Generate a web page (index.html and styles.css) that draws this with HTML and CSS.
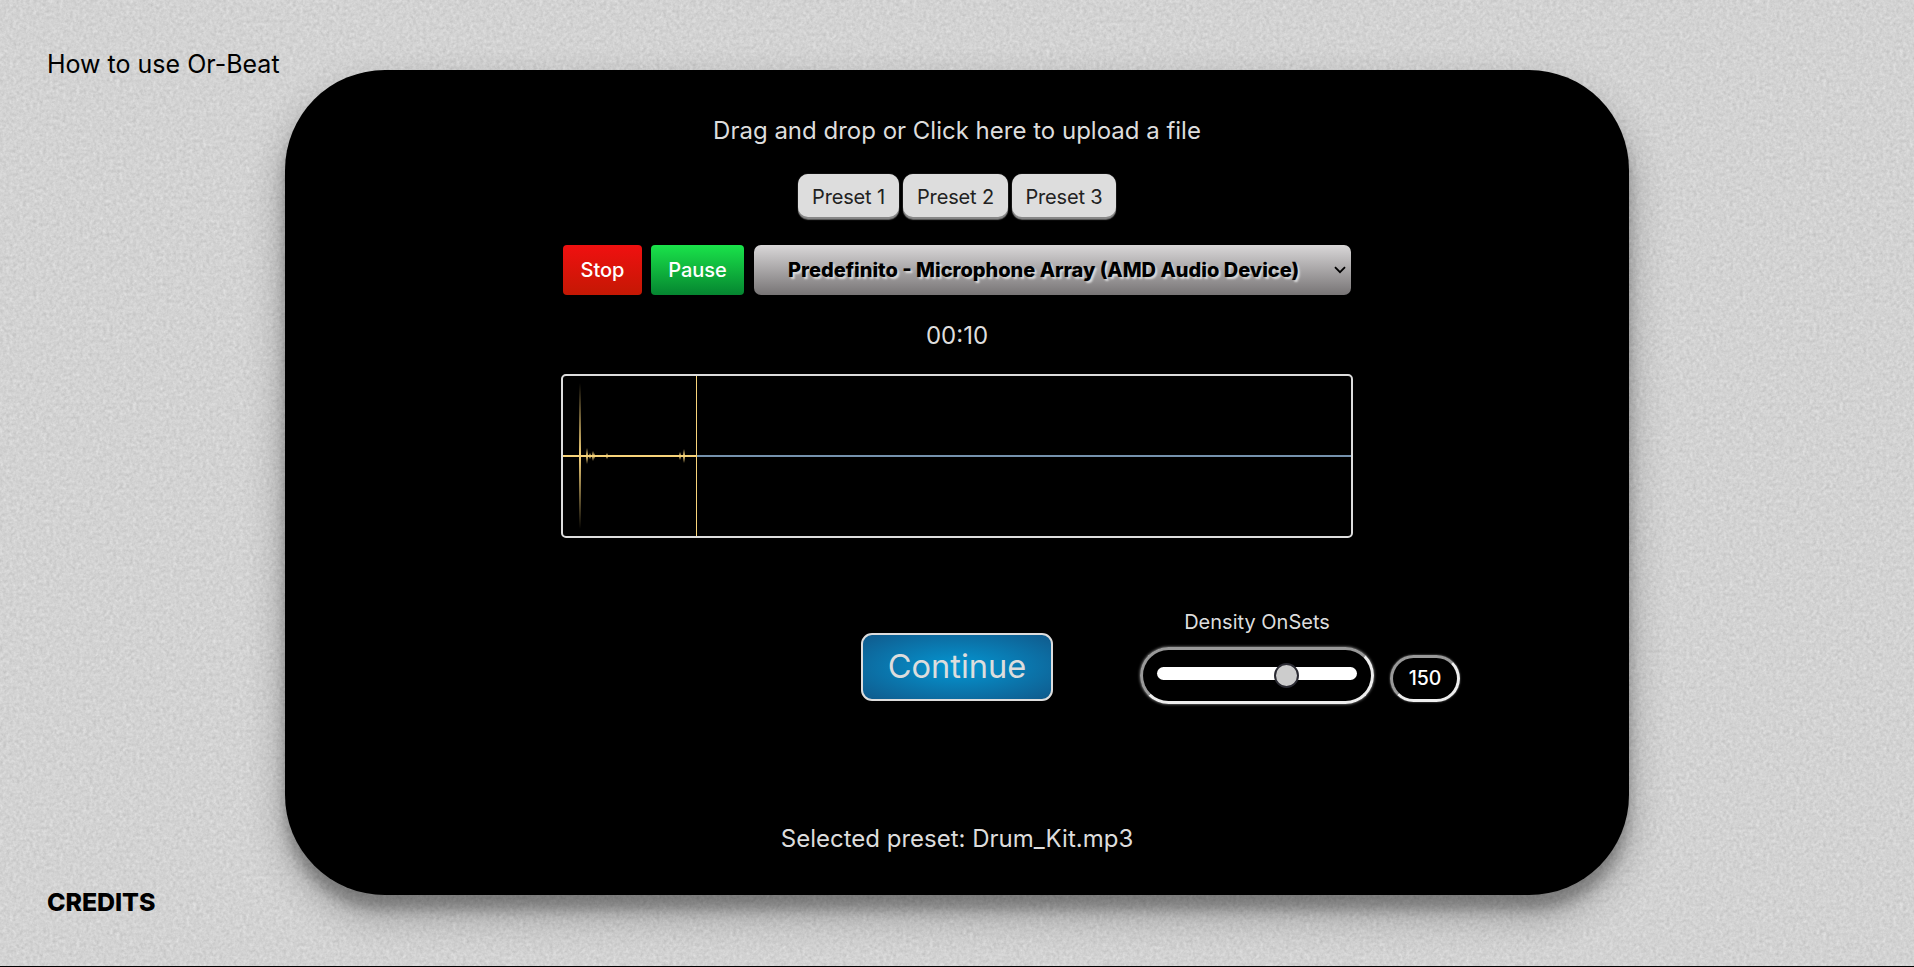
FILE: index.html
```html
<!DOCTYPE html>
<html lang="en">
<head>
<meta charset="utf-8">
<title>Or-Beat</title>
<link rel="stylesheet" href="styles.css">
</head>
<body>
<svg class="texture" aria-hidden="true">
  <filter id="grain" x="0" y="0" width="100%" height="100%" color-interpolation-filters="sRGB">
    <feTurbulence type="fractalNoise" baseFrequency="0.3" numOctaves="3" seed="4"/>
    <feColorMatrix values="0.12 0.08 0 0 0.725  0.12 0.08 0 0 0.725  0.12 0.08 0 0 0.725  0 0 0 0 1"/>
  </filter>
  <rect width="100%" height="100%" filter="url(#grain)"/>
</svg>
<div class="page">
  <aside class="side">
    <a class="howto">How to use Or-Beat</a>
    <a class="credits">CREDITS</a>
  </aside>
  <main class="panel">
    <p class="upload">Drag and drop or Click here to upload a file</p>
    <div class="presets">
      <button class="preset p1">Preset 1</button>
      <button class="preset p2">Preset 2</button>
      <button class="preset p3">Preset 3</button>
    </div>
    <div class="controls">
      <button class="btn stop">Stop</button>
      <button class="btn pause">Pause</button>
      <div class="device"><span>Predefinito - Microphone Array (AMD Audio Device)</span>
        <svg class="chevron" viewBox="0 0 12 8"><path d="M1 1.2 L6 6.2 L11 1.2" fill="none" stroke="#000" stroke-width="1.8"/></svg>
      </div>
    </div>
    <p class="timer">00:10</p>
    <div class="wave">
      <svg viewBox="0 0 788 160" width="788" height="160" shape-rendering="crispEdges">
        <defs>
          <linearGradient id="peak" x1="0" y1="0" x2="0" y2="1">
            <stop offset="0" stop-color="#f7d37a" stop-opacity="0"/>
            <stop offset=".5" stop-color="#f7d37a"/>
            <stop offset="1" stop-color="#f7d37a" stop-opacity="0"/>
          </linearGradient>
        </defs>
        <rect x="134" y="79" width="654" height="2" fill="#7592ad"/>
        <rect x="0" y="79" width="133" height="2" fill="#f7d37a"/>
        <g fill="url(#peak)">
          <rect x="16" y="7" width="2" height="146"/>
          <rect x="23" y="72" width="2" height="16"/>
          <rect x="26" y="77" width="2" height="6"/>
          <rect x="29" y="75" width="2" height="10"/>
          <rect x="31" y="77" width="1" height="6"/>
          <rect x="43" y="77" width="2" height="6"/>
          <rect x="116" y="76" width="2" height="8"/>
          <rect x="120" y="73" width="2" height="14"/>
        </g>
        <rect x="133" y="0" width="1" height="160" fill="#f7d37a"/>
      </svg>
    </div>
    <div class="actions">
      <button class="continue">Continue</button>
      <div class="density">
        <span class="label">Density OnSets</span>
        <div class="slider"><div class="track"><span class="thumb"></span></div></div>
      </div>
      <output class="value">150</output>
    </div>
    <p class="selected">Selected preset: Drum_Kit.mp3</p>
  </main>
</div>
</body>
</html>
```
FILE: styles.css
```css
* { box-sizing: border-box; }
body {
  margin: 0;
  height: 967px;
  overflow: hidden;
  background: #d3d3d3;
  font-family: Inter, sans-serif;
  color: #000;
}
.texture { position: absolute; inset: 0; width: 100%; height: 100%; }
.page {
  position: relative;
  display: flex;
  height: 967px;
  padding-top: 69.6px;
  border-bottom: 1px solid #000;
}
.side {
  display: flex;
  flex-direction: column;
  justify-content: space-between;
  width: 285px;
  height: 870px;
  margin-top: -21.6px;
  padding-left: 47px;
  white-space: nowrap;
  font-size: 25px;
  line-height: 32px;
}
.howto { font-weight: 400; }
.credits { font-weight: 800; letter-spacing: -.1px; }
.panel {
  display: flex;
  flex-direction: column;
  align-items: center;
  width: 1344px;
  height: 825px;
  padding-top: 45.4px;
  border-radius: 100px;
  background: #000;
  color: #ddd;
  box-shadow: 0 19px 38px rgba(0, 0, 0, .3), 0 15px 12px rgba(0, 0, 0, .22);
}
p { margin: 0; font-size: 24px; line-height: 32px; }
button { border: 0; padding: 0; font-family: inherit; }
.presets { display: flex; gap: 4px; margin-top: 27px; height: 43px; }
.preset {
  padding-top: 3px;
  border-radius: 10px;
  background: #ddd;
  color: #222;
  font-size: 20px;
  font-weight: 400;
  letter-spacing: -.15px;
  box-shadow: 0 2px 0 #888, 0 3px 1px #666, 0 0 1px #999;
}
.p1 { width: 101px; }
.p2 { width: 105px; }
.p3 { width: 104px; }
.controls { display: flex; width: 788px; height: 50px; margin-top: 28px; }
.btn { border-radius: 4px; color: #fff; font-size: 20px; font-weight: 500; }
.stop { width: 79px; margin-right: 9px; background: linear-gradient(#f01010, #c41804); }
.pause { width: 93px; margin-right: 10px; background: linear-gradient(#1ae34a, #058530); }
.device {
  display: flex;
  align-items: center;
  justify-content: space-between;
  width: 597px;
  padding: 0 5px 0 34px;
  border-radius: 7px;
  background: linear-gradient(#d9d7d8, #777475);
  color: #000;
  font-size: 20px;
  font-weight: 800;
  white-space: nowrap;
  text-shadow: 2px 2px 2px #ddd;
}
.chevron { width: 12px; height: 8px; }
.timer { margin-top: 25px; }
.wave {
  width: 792px;
  height: 164px;
  margin-top: 22px;
  border: 2px solid #ddd;
  border-radius: 5px;
}
.wave svg { display: block; }
.actions { display: flex; align-items: flex-start; width: 100%; height: 100px; margin-top: 71px; padding-left: 576px; }
.continue {
  width: 192px;
  height: 68px;
  margin-top: 24px;
  padding-bottom: 1px;
  border: 2px solid #ddd;
  border-radius: 11px;
  background: radial-gradient(#0496d2, #105a8c);
  color: #ddd;
  font-size: 32.6px;
}
.density { display: flex; flex-direction: column; align-items: center; width: 234px; margin-left: 87px; }
.label { font-size: 20px; line-height: 26px; }
.slider {
  width: 234px;
  height: 57px;
  margin-top: 12px;
  padding: 17px 14px 0;
  border: 3px solid;
  border-color: #999 #eee #eee #999;
  border-radius: 29px;
  box-shadow: 0 0 3px #aaa;
}
.track { display: flex; align-items: center; height: 13px; padding-left: 117px; border-radius: 7px; background: #fff; }
.thumb { flex: none; width: 25px; height: 25px; margin-top: 4px; border: 2px solid #2b2b33; border-radius: 50%; background: #ccc; }
.value {
  width: 70px;
  height: 47px;
  margin: 46px 0 0 16px;
  border: 3px solid;
  border-color: #999 #eee #eee #999;
  border-radius: 24px;
  color: #fff;
  font-size: 19.5px;
  font-weight: 450;
  line-height: 41px;
  text-align: center;
  box-shadow: 0 0 2px #888;
}
.selected { margin-top: 114px; }
```
